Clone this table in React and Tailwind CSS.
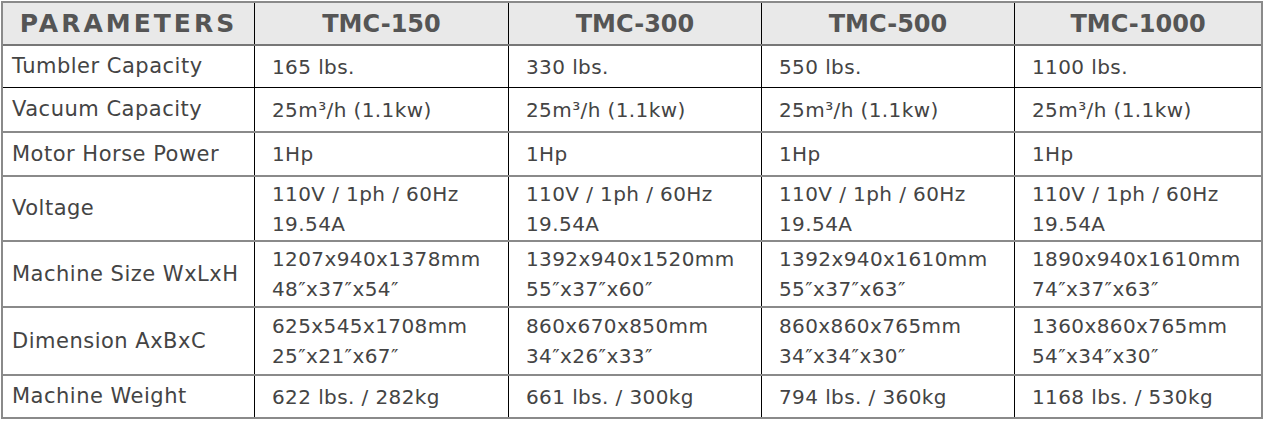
import React from 'react'

const models = ['TMC-150', 'TMC-300', 'TMC-500', 'TMC-1000']

// each row: label, height, values per model (array of lines)
const rows = [
  { label: 'Tumbler Capacity', h: 'h-[42px]', line: 'border-b border-b-black', values: [['165 lbs.'], ['330 lbs.'], ['550 lbs.'], ['1100 lbs.']] },
  { label: 'Vacuum Capacity', h: 'h-[45px]', values: [['25m³/h (1.1kw)'], ['25m³/h (1.1kw)'], ['25m³/h (1.1kw)'], ['25m³/h (1.1kw)']] },
  { label: 'Motor Horse Power', h: 'h-[44px]', values: [['1Hp'], ['1Hp'], ['1Hp'], ['1Hp']] },
  { label: 'Voltage', h: 'h-[65px]', values: [['110V / 1ph / 60Hz', '19.54A'], ['110V / 1ph / 60Hz', '19.54A'], ['110V / 1ph / 60Hz', '19.54A'], ['110V / 1ph / 60Hz', '19.54A']] },
  { label: 'Machine Size WxLxH', h: 'h-[66px]', values: [['1207x940x1378mm', '48″x37″x54″'], ['1392x940x1520mm', '55″x37″x60″'], ['1392x940x1610mm', '55″x37″x63″'], ['1890x940x1610mm', '74″x37″x63″']] },
  { label: 'Dimension AxBxC', h: 'h-[68px]', values: [['625x545x1708mm', '25″x21″x67″'], ['860x670x850mm', '34″x26″x33″'], ['860x860x765mm', '34″x34″x30″'], ['1360x860x765mm', '54″x34″x30″']] },
  { label: 'Machine Weight', h: 'h-[41px]', last: true, values: [['622 lbs. / 282kg'], ['661 lbs. / 300kg'], ['794 lbs. / 360kg'], ['1168 lbs. / 530kg']] },
]

const cols = 'grid grid-cols-[251px_254px_253px_253px_1fr]'

export default function App() {
  return (
    <div className="w-[1265px] h-[421px] bg-white pl-px pt-px font-['DejaVu_Sans',sans-serif]">
      <div className="w-[1262px] border-2 border-[#8a8a8a]">
        {/* header */}
        <div className={`${cols} h-[43px] bg-[#e9e9e9] border-b-2 border-b-[#777]`}>
          <div className="flex items-center justify-center text-[25px] font-bold tracking-[3px] text-[#555]">
            PARAMETERS
          </div>
          {models.map((t) => (
            <div
              key={t}
              className="flex items-center justify-center text-[24px] font-bold text-[#555] border-l border-l-black"
            >
              {t}
            </div>
          ))}
        </div>

        {rows.map((r) => (
          <div
            key={r.label}
            className={`${cols} ${r.h} ${r.last ? '' : r.line || 'border-b-2 border-b-[#8a8a8a]'}`}
          >
            <div className="flex items-center pt-px pl-[9px] text-[21px] tracking-[0.5px] text-[#444]">{r.label}</div>
            {r.values.map((lines, i) => (
              <div
                key={i}
                className="flex flex-col justify-center pl-[17px] border-l border-l-black text-[20px] tracking-[0.4px] leading-[30px] text-[#444]"
              >
                {lines.map((l) => (
                  <span key={l}>{l}</span>
                ))}
              </div>
            ))}
          </div>
        ))}
      </div>
    </div>
  )
}
